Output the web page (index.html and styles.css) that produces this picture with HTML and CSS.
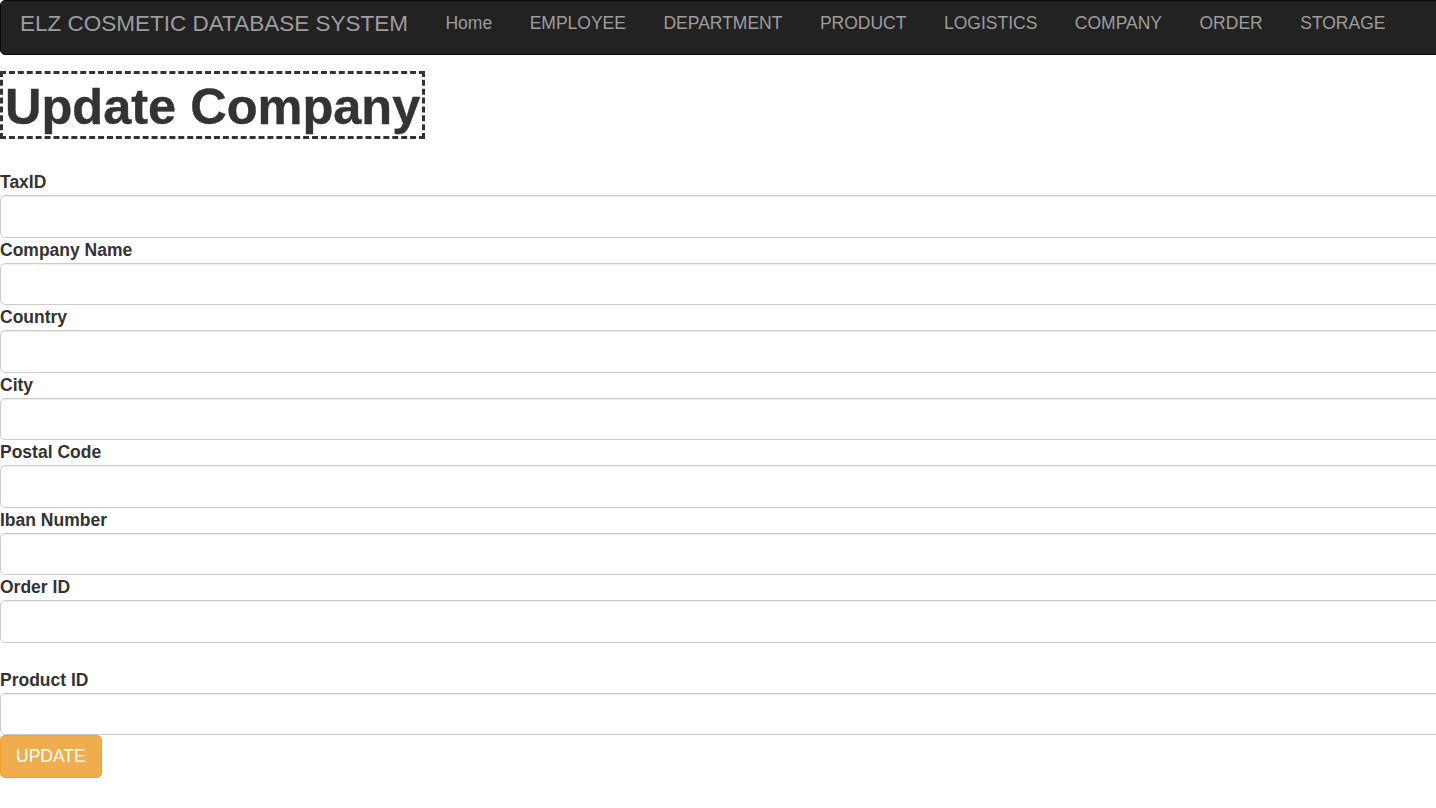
FILE: index.html
```html
<!DOCTYPE html>
<html lang="en">
<head>
<meta charset="utf-8">
<title>Update Company</title>
<link rel="stylesheet" href="styles.css">
</head>
<body>
<nav class="navbar">
  <a class="brand" href="#">ELZ COSMETIC DATABASE SYSTEM</a>
  <ul class="nav">
    <li><a href="#">Home</a></li>
    <li><a href="#">EMPLOYEE</a></li>
    <li><a href="#">DEPARTMENT</a></li>
    <li><a href="#">PRODUCT</a></li>
    <li><a href="#">LOGISTICS</a></li>
    <li><a href="#">COMPANY</a></li>
    <li><a href="#">ORDER</a></li>
    <li><a href="#">STORAGE</a></li>
  </ul>
</nav>
<h1 class="title">Update Company</h1>
<form class="form">
  <div class="field"><label>TaxID</label><input class="control" type="text"></div>
  <div class="field"><label>Company Name</label><input class="control" type="text"></div>
  <div class="field"><label>Country</label><input class="control" type="text"></div>
  <div class="field"><label>City</label><input class="control" type="text"></div>
  <div class="field"><label>Postal Code</label><input class="control" type="text"></div>
  <div class="field"><label>Iban Number</label><input class="control" type="text"></div>
  <div class="field"><label>Order ID</label><input class="control" type="text"></div>
  <div class="spacer"></div>
  <div class="field"><label>Product ID</label><input class="control" type="text"></div>
  <button class="btn-update" type="button">UPDATE</button>
</form>
</body>
</html>
```
FILE: styles.css
```css
html, body {
  margin: 0;
  padding: 0;
  overflow: hidden;
}
body {
  font-family: "Liberation Sans", Arial, Helvetica, sans-serif;
  font-size: 17.5px;
  line-height: 25px;
  color: #333;
  background: #fff;
}
.navbar {
  display: flex;
  align-items: flex-start;
  height: 43px;
  padding-top: 10px;
  margin-right: -10px;
  background: #222;
  border: 1px solid #080808;
  border-radius: 5px;
}
.brand {
  padding: 0 18.75px 0 19px;
  font-size: 22.5px;
  line-height: 25px;
  color: #9d9d9d;
  text-decoration: none;
}
.nav {
  display: flex;
  margin: 0;
  padding: 0;
  list-style: none;
}
.nav a {
  display: block;
  padding: 0 18.75px;
  font-size: 17.5px;
  line-height: 25px;
  color: #9d9d9d;
  text-decoration: none;
}
.title {
  display: inline-block;
  margin: 16px 0 0 0;
  padding: 4px 2px 0 2px;
  font-size: 50.5px;
  line-height: 58px;
  font-weight: bold;
  white-space: nowrap;
  color: #333;
  border: 3px dashed #333;
  -webkit-text-stroke: 0.4px #333;
}
.form {
  display: flex;
  flex-direction: column;
  margin-top: 31px;
}
.field {
  display: flex;
  flex-direction: column;
}
.field label {
  font-weight: bold;
  font-size: 17.5px;
  line-height: 25px;
  height: 25px;
}
.control {
  display: block;
  width: 1480px;
  height: 42.5px;
  box-sizing: border-box;
  margin: 0;
  padding: 7.5px 15px;
  font-family: inherit;
  font-size: 17.5px;
  color: #555;
  background: #fff;
  border: 1px solid #ccc;
  border-radius: 5px;
  box-shadow: inset 0 1px 1px rgba(0, 0, 0, 0.075);
}
.spacer {
  height: 25px;
}
.btn-update {
  align-self: flex-start;
  height: 42.5px;
  padding: 0 15px;
  font-family: inherit;
  font-size: 17.5px;
  line-height: 25px;
  color: #fff;
  background: #f0ad4e;
  border: 1px solid #eea236;
  border-radius: 5px;
}
```
